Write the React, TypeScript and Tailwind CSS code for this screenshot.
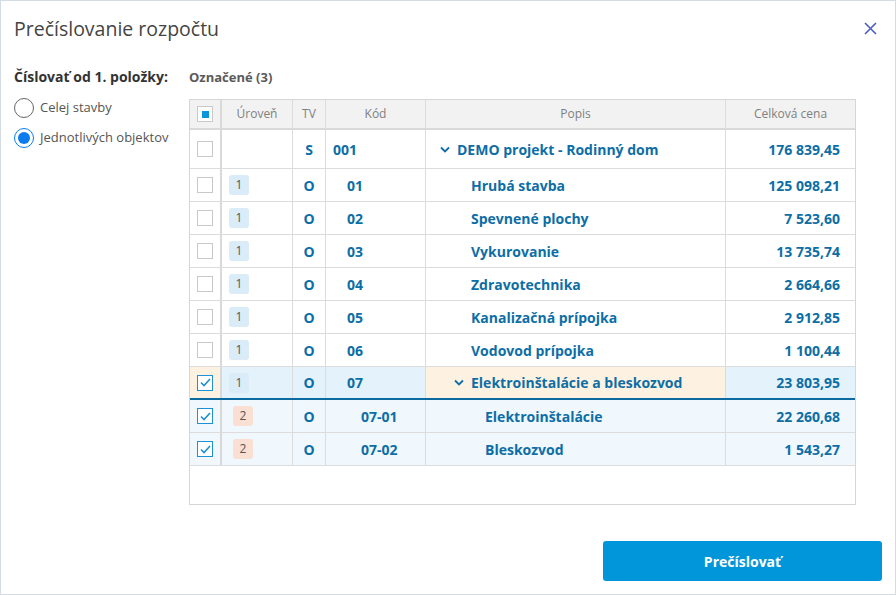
import { Fragment } from "react";

type Row = {
  level: number | null;
  tv: string;
  kod: string;
  popis: string;
  cena: string;
  depth: number;
  open?: boolean;
  checked?: boolean;
  active?: boolean;
  child?: boolean;
};

const rows: Row[] = [
  { level: null, tv: "S", kod: "001", popis: "DEMO projekt - Rodinný dom", cena: "176 839,45", depth: 0, open: true },
  { level: 1, tv: "O", kod: "01", popis: "Hrubá stavba", cena: "125 098,21", depth: 1 },
  { level: 1, tv: "O", kod: "02", popis: "Spevnené plochy", cena: "7 523,60", depth: 1 },
  { level: 1, tv: "O", kod: "03", popis: "Vykurovanie", cena: "13 735,74", depth: 1 },
  { level: 1, tv: "O", kod: "04", popis: "Zdravotechnika", cena: "2 664,66", depth: 1 },
  { level: 1, tv: "O", kod: "05", popis: "Kanalizačná prípojka", cena: "2 912,85", depth: 1 },
  { level: 1, tv: "O", kod: "06", popis: "Vodovod prípojka", cena: "1 100,44", depth: 1 },
  { level: 1, tv: "O", kod: "07", popis: "Elektroinštalácie a bleskozvod", cena: "23 803,95", depth: 1, open: true, checked: true, active: true },
  { level: 2, tv: "O", kod: "07-01", popis: "Elektroinštalácie", cena: "22 260,68", depth: 2, checked: true, child: true },
  { level: 2, tv: "O", kod: "07-02", popis: "Bleskozvod", cena: "1 543,27", depth: 2, checked: true, child: true },
];

const cols = "grid grid-cols-[32px_71px_33px_100px_300px_129px]";

function Checkbox({ checked, partial }: { checked?: boolean; partial?: boolean }) {
  return (
    <span
      className={
        "flex h-4 w-4 items-center justify-center border bg-white " +
        (checked ? "border-[#1e90d6]" : "border-[#c9c9c9]")
      }
    >
      {partial && <span className="h-[7px] w-[7px] bg-[#0b95db]" />}
      {checked && (
        <svg width="11" height="9" viewBox="0 0 11 9" fill="none">
          <path d="M1 4.5 L4 7.5 L10 1" stroke="#1e90d6" strokeWidth="1.6" />
        </svg>
      )}
    </span>
  );
}

function Chevron() {
  return (
    <svg width="10" height="7" viewBox="0 0 10 7" fill="none" className="mr-[7px] shrink-0">
      <path d="M1 1.5 L5 5.5 L9 1.5" stroke="#0d6ea6" strokeWidth="1.8" />
    </svg>
  );
}

function Radio({ on, label }: { on?: boolean; label: string }) {
  return (
    <label className="flex h-[30px] items-center gap-[6px] text-[13px] text-[#555]">
      <span
        className={
          "flex h-[20px] w-[20px] items-center justify-center rounded-full border " +
          (on ? "border-[#0a7cf0]" : "border-[#666]")
        }
      >
        {on && <span className="h-[12px] w-[12px] rounded-full bg-[#0a7cf0]" />}
      </span>
      {label}
    </label>
  );
}

export default function App() {
  return (
    <div
      className="flex h-[595px] w-[896px] flex-col border border-[#d3dbe4] bg-white"
      style={{ fontFamily: '"Open Sans", "Noto Sans", sans-serif' }}
    >
      <div className="flex h-[55px] items-center justify-between pl-[13px] pr-[18px]">
        <h1 className="text-[19.5px] text-[#444]">Prečíslovanie rozpočtu</h1>
        <svg width="13" height="13" viewBox="0 0 13 13" fill="none">
          <path d="M1 1 L12 12 M12 1 L1 12" stroke="#4a5cc4" strokeWidth="1.6" />
        </svg>
      </div>

      <div className="flex flex-1 pl-[13px] pt-[11px]">
        <div className="w-[175px]">
          <div className="h-[20px] text-[14px] font-bold leading-[20px] text-[#333]">Číslovať od 1. položky:</div>
          <div className="mt-[6px]">
            <Radio label="Celej stavby" />
            <Radio on label="Jednotlivých objektov" />
          </div>
        </div>

        <div className="flex flex-col">
          <div className="h-[20px] text-[13px] font-bold leading-[20px] text-[#5a5a5a]">Označené (3)</div>
          <div className="mt-[12px] h-[406px] w-[667px] border border-[#d6d6d6]">
            <div className={cols + " h-[30px] border-b-2 border-[#d9d9d9] bg-[#f2f2f2] text-[12px] text-[#808080]"}>
              <div className="flex items-center justify-center border-r-2 border-[#d9d9d9]">
                <Checkbox partial />
              </div>
              <div className="flex items-center justify-center border-r border-[#dcdcdc]">Úroveň</div>
              <div className="flex items-center justify-center border-r border-[#dcdcdc]">TV</div>
              <div className="flex items-center justify-center border-r border-[#dcdcdc]">Kód</div>
              <div className="flex items-center justify-center border-r border-[#dcdcdc]">Popis</div>
              <div className="flex items-center justify-center">Celková cena</div>
            </div>

            {rows.map((r, i) => {
              const base = r.active ? "bg-[#e4f3fb]" : r.child ? "bg-[#f0f8fd]" : "bg-white";
              const warm = r.active ? "bg-[#fdf2e1]" : base;
              return (
                <Fragment key={r.kod}>
                  <div
                    className={
                      cols +
                      " text-[14px] font-bold text-[#0d6ea6] " +
                      (i === 0 ? "h-[39px] " : "h-[33px] ") +
                      (r.active ? "border-b-2 border-[#0b6aa0]" : "border-b border-[#dcdcdc]")
                    }
                  >
                    <div className={"flex items-center justify-center border-r-2 border-[#d9d9d9] " + warm}>
                      <Checkbox checked={r.checked} />
                    </div>
                    <div
                      className={"flex items-center border-r border-[#dcdcdc] " + base}
                      style={{ paddingLeft: 7 + ((r.level ?? 1) - 1) * 4 }}
                    >
                      {r.level && (
                        <span
                          className={
                            "flex h-[20px] w-[20px] items-center justify-center rounded-[3px] text-[12px] font-normal text-[#555] " +
                            (r.level === 1 ? "bg-[#d9ecf8]" : "bg-[#fadfd3]")
                          }
                        >
                          {r.level}
                        </span>
                      )}
                    </div>
                    <div className={"flex items-center justify-center border-r border-[#dcdcdc] " + base}>{r.tv}</div>
                    <div
                      className={"flex items-center border-r border-[#dcdcdc] " + base}
                      style={{ paddingLeft: 7 + r.depth * 14 }}
                    >
                      {r.kod}
                    </div>
                    <div
                      className={"flex items-center border-r border-[#dcdcdc] " + warm}
                      style={{ paddingLeft: r.open ? 14 + r.depth * 14 : 31 + r.depth * 14 }}
                    >
                      {r.open && <Chevron />}
                      {r.popis}
                    </div>
                    <div className={"flex items-center justify-end pr-[15px] " + base}>{r.cena}</div>
                  </div>
                </Fragment>
              );
            })}
          </div>
        </div>
      </div>

      <div className="flex justify-end pb-[13px] pr-[13px]">
        <button className="h-[40px] w-[279px] rounded-[3px] bg-[#0096d9] text-[14px] font-bold text-white">
          Prečíslovať
        </button>
      </div>
    </div>
  );
}
